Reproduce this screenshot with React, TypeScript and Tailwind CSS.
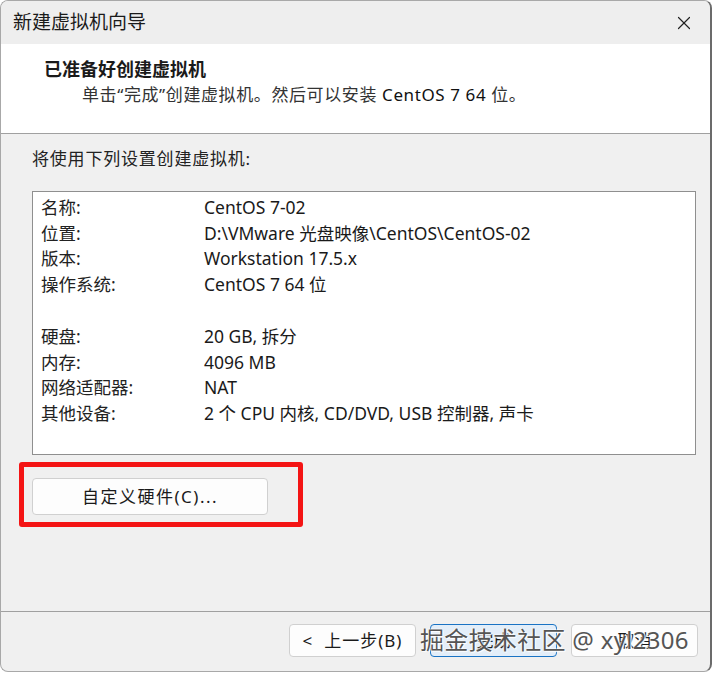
import { X } from "lucide-react";

const rows: [string, string][] = [
  ["名称:", "CentOS 7-02"],
  ["位置:", "D:\\VMware 光盘映像\\CentOS\\CentOS-02"],
  ["版本:", "Workstation 17.5.x"],
  ["操作系统:", "CentOS 7 64 位"],
  ["", ""],
  ["硬盘:", "20 GB, 拆分"],
  ["内存:", "4096 MB"],
  ["网络适配器:", "NAT"],
  ["其他设备:", "2 个 CPU 内核, CD/DVD, USB 控制器, 声卡"],
];

const font = "font-['Noto_Sans','Noto_Sans_CJK_SC',sans-serif]";

const App = () => {
  return (
    <div className={`w-[714px] h-[674px] bg-white text-[#1a1a1a] ${font}`}>
      <div className="relative w-[712px] h-[672px] rounded-[8px] border border-[#a8a8a8] border-r-2 border-r-[#6b6b6b] overflow-hidden flex flex-col bg-[#f0f0f0]">
        {/* title bar */}
        <div className="h-[43px] shrink-0 bg-[#eeeeee] flex items-center justify-between pl-[12px] pr-[15px]">
          <span className="text-[19px] leading-none">新建虚拟机向导</span>
          <X size={22} strokeWidth={1.3} className="text-[#222]" />
        </div>

        {/* header */}
        <div className="h-[90px] shrink-0 bg-white border-b border-[#a0a0a0] pl-[43px] pt-[12px]">
          <div className="text-[18px] font-bold leading-[24px] font-['Noto_Sans_CJK_SC',serif]">已准备好创建虚拟机</div>
          <div className="pl-[38px] mt-[4px] text-[17px] leading-[22px] text-[#333] tracking-[0.6px]">
            单击“完成”创建虚拟机。然后可以安装 <span className="text-[#111]">CentOS 7 64</span> 位。
          </div>
        </div>

        {/* body */}
        <div className="flex-1 pl-[31px] pt-[14px] border-b border-[#a0a0a0]">
          <div className="text-[17px] leading-[22px] text-[#222] tracking-[0.8px]">将使用下列设置创建虚拟机:</div>
          <div className="mt-[21px] w-[664px] h-[264px] bg-white border border-[#8f8f8f] pt-[2px] pl-[8px]">
            {rows.map(([label, value], i) => (
              <div key={i} className="flex h-[25.8px] items-center text-[17.5px]">
                <span className="w-[163px] text-[#222]">{label}</span>
                <span>{value}</span>
              </div>
            ))}
          </div>
          <div className="relative mt-[23px] w-[236px]">
            <button className="w-[236px] h-[37px] bg-[#fdfdfd] border border-[#d0d0d0] rounded-[4px] text-[17px] tracking-[1.5px] text-[#1a1a1a]">
              自定义硬件(C)...
            </button>
            <div className="absolute left-[-13px] top-[-16px] w-[284px] h-[65px] border-[5px] border-[#f41414] rounded-[3px]" />
          </div>
        </div>

        {/* footer buttons */}
        <div className="h-[59px] shrink-0 flex items-center justify-end gap-[14px] pr-[12px] pb-[2px]">
          <button className="w-[127px] h-[33px] bg-[#fdfdfd] border border-[#d0d0d0] rounded-[4px] text-[17px] tracking-[1px]">
            &lt;&nbsp; 上一步(B)
          </button>
          <button className="w-[127px] h-[33px] bg-[#e3eef9] border border-[#1a73c4] rounded-[4px] text-[17px]">
            完成
          </button>
          <button className="w-[127px] h-[33px] bg-[#fdfdfd] border border-[#d0d0d0] rounded-[4px] text-[17px]">
            取消
          </button>
        </div>

        <div className="absolute left-[419px] top-[621px] text-[24px] leading-[36px] text-[#555] whitespace-nowrap tracking-[0.3px] [text-shadow:0_0_2px_#fff,0_0_2px_#fff,1px_1px_1px_#fff]">
          掘金技术社区 @ xyl2306
        </div>
      </div>
    </div>
  );
};

export default App;
